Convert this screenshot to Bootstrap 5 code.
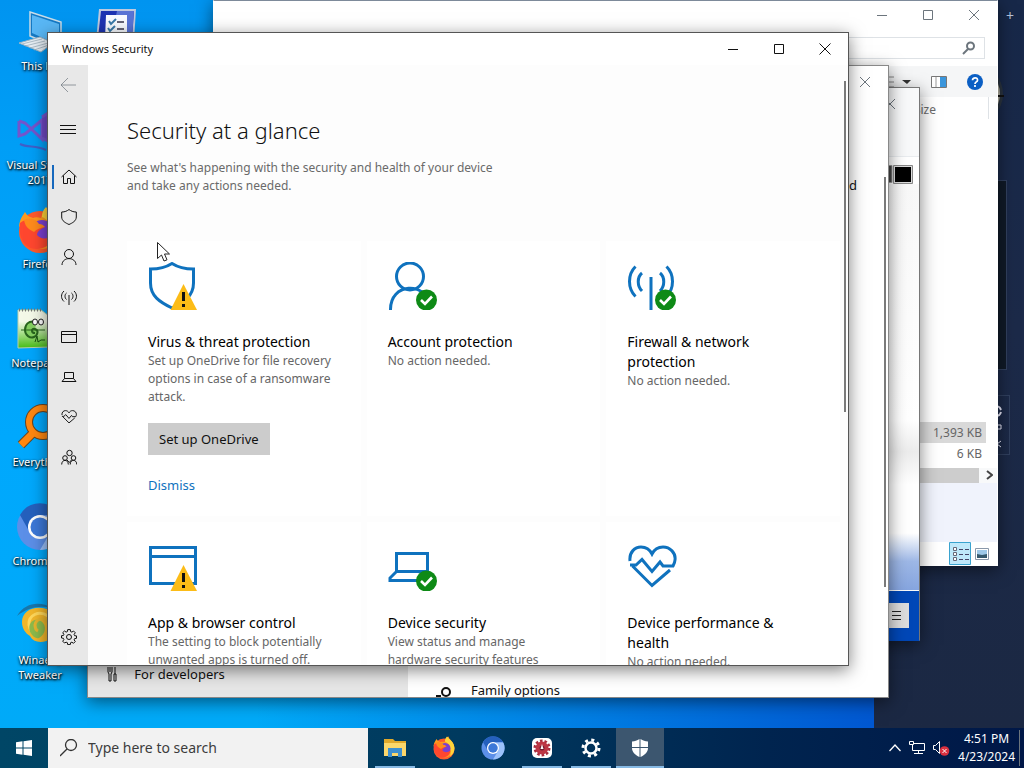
<!DOCTYPE html>
<html lang="en">
<head>
<meta charset="utf-8">
<meta name="viewport" content="width=device-width, initial-scale=1">
<title>Windows Security</title>
<link href="https://cdn.jsdelivr.net/npm/bootstrap@5.3.0/dist/css/bootstrap.min.css" rel="stylesheet">
<style>
:root{--accent:#0f72be}
body{font-family:"Noto Sans","Open Sans",sans-serif;font-size:12px;line-height:18px;color:#111}
svg{display:block;flex:none}
button{border:0;background:none;padding:0;color:inherit}
.desktop{background:linear-gradient(90deg,transparent 25%,#0058d2 85%),linear-gradient(180deg,#0094f0 0,#009ef6 20%,#00a8fd 60%,#00aaf8 100%)}
.win{position:absolute;background:#fff;border:1px solid #666;box-shadow:0 4px 16px rgba(0,0,0,.5);overflow:hidden}
.gadgets{inset:0 0 0 auto;width:150px;background:linear-gradient(180deg,#172849,#1c2a49 45%,#1b2843)}
.add-gadget{top:7px;right:10px;color:#b8c4dc;font-size:14px}
.clock-face{top:62px;right:20px}
.graph-box{top:180px;right:17px;width:20px;height:190px;background:#101a28;border:1px solid #31405f}
.cal-box{top:395px;right:14px;width:24px;height:60px;border:1px solid #31405f}
.explorer{inset:0 26px 162px 213px;border-color:#7d8a9a #fff #fff}
.explorer .caption-btn{height:28px}
.explorer-search{height:22px;margin:8px 12px 0 0}
.explorer-tools{height:31px;margin-top:7px;padding-right:14px;background:#f5f6f7}
.size-head{margin-right:8px;padding:4px 52px 0 0}
.browser{inset:87px 104px 87px 130px;border-color:#777 #777 #0046b4;background:#0047b7}
.settings{inset:65px 135px 30px 87px;border-color:#888}
.security{inset:32px 175px 62px 47px;border-color:#555}
.win-title{padding-left:14px;font-size:11px}
.caption-btn{width:46px;height:32px;display:grid;place-items:center}
.desk-item{width:80px;height:99px;text-align:center;color:#fff;text-decoration:none;font-size:11px;line-height:15px;text-shadow:1px 1px 2px #000,0 1px 3px #000}
.desk-item svg{margin:0 auto 2px}
.side-nav{width:40px;background:#e8e8e8}
.side-nav .slot{width:40px;height:40px;display:grid;place-items:center;position:relative;color:#111}
.side-nav a.slot{padding-left:2px}
.side-nav .current::before{content:"";position:absolute;left:4px;top:8px;width:2px;height:24px;background:#1668bd}
.side-nav svg,.caption-btn svg,.line-icon{fill:none;stroke:currentColor}
.pane{background:#fdfdfd;padding:47px 8px 0 39px;position:relative}
.pane h1{font-size:22px;line-height:36px;font-weight:300;margin:0 0 11px;color:#111}
.muted{color:#6a6a6a}
.tiles{display:grid;grid-template-columns:repeat(3,minmax(0,1fr));gap:6px;margin-top:46px}
.tile{background:#fff;padding:21px 26px 0 21px;min-height:275px}
.tile h2{font-size:14px;line-height:20px;font-weight:400;margin:22px 0 0;color:#000}
.tile p{margin:0;color:#666}
.tile-icon{fill:none;stroke:var(--accent);stroke-width:3}
.btn-gray{background:#ccc;border-radius:0;height:32px;padding:0 10px;font-size:13px;line-height:20px;color:#111;margin-top:17px}
.dismiss{color:var(--accent);text-decoration:none;margin-top:20px;font-size:13px;line-height:20px}
.scroll-thumb{position:absolute;width:2px;background:#7a7a7a}
.taskbar{height:40px;background:linear-gradient(90deg,#004666,#003a5f 45%,#00244f 75%,#001747);color:#fff}
.task-start{width:48px}
.search-box{width:320px;background:#f2f2f2;color:#333}
.search-box input{border:0;background:none;outline:0;font-size:14px;color:#333;width:100%}
.search-box input::placeholder{color:#3c3c3c;opacity:1}
.task-list{column-gap:1px;margin-left:3px}
.task-btn{width:48px;height:40px;display:grid;place-items:center;position:relative}
.running::after{content:"";position:absolute;left:4px;right:4px;bottom:0;height:2px;background:#86b9e4}
.focused{background:#3c566f}
.focused::after{left:0;right:0}
.file-row td{padding:0 15px 0 3px;height:21px;text-align:right;color:#666}
.file-row.picked td{background:linear-gradient(#d9d9d9,#d9d9d9) left/calc(100% - 11px) 100% no-repeat}
.pointer{left:157px;top:242px}
</style>
</head>
<body>
<svg width="0" height="0" class="position-absolute">
  <defs>
    <g id="ok" stroke="none"><circle cx="38.500" cy="38" r="10.500" fill="#0e8a16"/><path d="M33 38l4 4 7-7.500" fill="none" stroke="#fff" stroke-width="2.600"/></g>
    <g id="warn" stroke="none"><path d="M35.500 22L49 48H22.500z" fill="#fcbc17"/><path d="M34 30h3v9h-3zM34 42h3v3h-3z" fill="#111"/></g>
    <g id="fox">
      <circle cx="24" cy="26" r="21" fill="#ff5a2c"/>
      <path d="M3 20C4 12 8 8 9 6c2 4 5 5 8 6 2-1 5-1 8 0 2-6 3-9 8-11 1 5 5 7 9 13 4 8 3 16-2 22-6 8-16 8-22 5z" fill="#ff9a1e"/>
      <path d="M30 1c4 6 14 10 15 23 0 8-4 14-9 17 4-12 0-26-10-30 0-4 1-7 4-10z" fill="#ffd43a"/>
      <circle cx="26" cy="25" r="11" fill="#7a3fd0"/>
      <path d="M4 17c6-5 14-4 18 1 3 1 5 1 7 3-6 3-8 5-8 8 4 5 11 4 16 0-1 9-8 14-16 14C9 43 2 32 4 17z" fill="#ff472f"/>
      <path d="M8 14c6-3 12-1 15 4 3 0 4 1 6 3-5 1-8 2-11 5C12 23 9 20 8 14z" fill="#ff8b1c"/>
    </g>
    <g id="chromium">
      <circle cx="24" cy="24" r="23" fill="#5c8fe8"/>
      <path d="M4 12A23 23 0 0 1 44 12H24A12 12 0 0 0 13 28z" fill="#2560bd"/>
      <path d="M44.500 13A23 23 0 0 1 24 47l10-17c3-5 1-11-4-17z" fill="#9cc2fb"/>
      <circle cx="24" cy="24" r="12" fill="#fff"/><circle cx="24" cy="24" r="9.500" fill="#3c78d8"/>
    </g>
    <path id="heart" d="M3 18C2 9 8 4 14 4c5 0 9 3 11 7 2-4 6-7 11-7 7 0 13 6 12 13 0 2-1 4-2 6H36l-3-4-8 9.500-10-12L9 22H3M5.500 23L25 42.500 43 27"/>
  </defs>
</svg>

<div class="vh-100 d-flex flex-column overflow-hidden">
<main class="desktop position-relative flex-grow-1 overflow-hidden">
  <div class="d-flex align-items-start pt-2">
    <nav class="d-flex flex-column" aria-label="Desktop">
      <a href="#" class="desk-item"><svg width="48" height="48" viewBox="0 0 48 48"><path d="M14 4l31 10v27L14 28z" fill="#1579c4" stroke="#c8dce8" stroke-width="1.500"/><path d="M16 7l27 9v21L16 25z" fill="#59b7f5"/><path d="M3 35l21-6 13 6-12 9z" fill="#e7eef4" stroke="#9db4c4"/><path d="M6 36l20-5M9 38l20-5M14 40l18-5M18 42l15-5" stroke="#93a6b3" stroke-width=".7"/></svg>This PC</a>
      <a href="#" class="desk-item"><svg width="48" height="48" viewBox="0 0 48 48" fill="none" stroke="#7455cc" stroke-width="3"><path d="M3 14v15l6-2 17-14v19L9 16l-6-2"/><path d="M26 10l6-4v28l-6-3" fill="#7048c4"/><path d="M4 37c8 4 15 1 26 6" stroke="#415fc8" stroke-width="2"/></svg>Visual Studio<br>2017</a>
      <a href="#" class="desk-item"><svg width="48" height="48" viewBox="0 0 48 48"><use href="#fox"/></svg>Firefox</a>
      <a href="#" class="desk-item"><svg width="48" height="48" viewBox="0 0 48 48"><defs><linearGradient id="npp" x2="0" y2="1"><stop offset=".3" stop-color="#f4f9e8"/><stop offset="1" stop-color="#48bd16"/></linearGradient></defs><path d="M2 5h23l8 6v31l-31 1z" fill="url(#npp)" stroke="#b6cfaa"/><path d="M3 5h23" stroke="#777" stroke-width="3" stroke-dasharray="1 2"/><path d="M20 17c-8-2-11 3-11 8s5 9 9 7 5-7 1-8-4 4 0 4" fill="#83ce60" stroke="#28651d" stroke-width="2"/><path d="M5 25h24" stroke="#28651d"/><ellipse cx="19" cy="17" rx="2.500" ry="3" fill="#fff" stroke="#222"/><ellipse cx="25" cy="17" rx="2.500" ry="3" fill="#fff" stroke="#222"/><path d="M19 37l2-6 1 6 3-2 4 0" fill="none" stroke="#195211"/></svg>Notepad++</a>
      <a href="#" class="desk-item"><svg width="48" height="48" viewBox="0 0 48 48" fill="none"><circle cx="27" cy="18" r="14" stroke="#6a4521" stroke-width="8"/><path d="M17 29L5 41" stroke="#6a4521" stroke-width="9"/><circle cx="27" cy="18" r="14" stroke="#ff8710" stroke-width="6"/><path d="M17 29L5 41" stroke="#ff8710" stroke-width="7"/></svg>Everything</a>
      <a href="#" class="desk-item"><svg width="48" height="48" viewBox="0 0 48 48"><use href="#chromium"/></svg>Chromium</a>
      <a href="#" class="desk-item"><svg width="48" height="48" viewBox="0 0 48 48"><path d="M1 14C9 0 25-1 36 6 24 3 12 5 1 14z" fill="#1976aa"/><path d="M6 20C6 8 19 3 31 7c12 6 13 22 5 29-8 6-19 5-22-2C9 31 6 26 6 20z" fill="#f2b72b"/><path d="M32 14c-9-6-20-1-19 9 1 5 3 8 6 9" fill="none" stroke="#ffd85c" stroke-width="3"/><path d="M14 30c-3-9 4-15 11-11 6 4 5 13-2 17-3 1-6-1-9-6z" fill="#8dbb4c"/><path d="M31 20c-4-5-11-3-12 3 0 3 1 5 3 6" fill="none" stroke="#e8b52e" stroke-width="3"/></svg>Winaero<br>Tweaker</a>
    </nav>
    <a href="#" class="desk-item" aria-label="Checklist"><svg width="48" height="48" viewBox="0 0 48 48"><path d="M3 1h37l-2 32H0z" fill="#bfc9df"/><path d="M5 3h33l-2 27H2z" fill="#1d34b2"/><path d="M21 3h17l-2 27H15z" fill="#5974d5"/><path d="M10 7h21v24H9z" fill="#f8fbff"/><path d="M13 13l2 3 5-5M12 20l2 3 5-5" fill="none" stroke="#3979a8" stroke-width="2"/><path d="M21 14h7M21 21h7" stroke="#667" stroke-width="2"/></svg></a>
  </div>

  <aside class="gadgets position-absolute overflow-hidden">
    <button class="add-gadget position-absolute" aria-label="Add gadget">+</button>
    <svg class="clock-face position-absolute" width="64" height="64" viewBox="0 0 64 64"><circle cx="32" cy="32" r="31" fill="#2b3540"/><circle cx="32" cy="32" r="28" fill="#b8b6a6"/><path d="M34 34h30" stroke="#111" stroke-width="2"/><circle cx="32" cy="32" r="25" fill="none" stroke="#444" stroke-width="1.500" stroke-dasharray="1 4"/></svg>
    <div class="graph-box position-absolute"></div>
    <div class="cal-box position-absolute"><svg class="ms-1 mt-2" width="16" height="44" viewBox="0 0 16 44" fill="none" stroke="#eef"><path d="M4 2c5 0 5 2 6 4M10 8c-1 3-2 4-6 4" stroke-width="2"/><path d="M5 21h5v4H5zM10 37l-4 3 4 3"/></svg></div>
  </aside>

  <section class="win explorer d-flex flex-column" aria-label="File Explorer">
    <div class="d-flex justify-content-end text-secondary">
      <button class="caption-btn" aria-label="Minimize"><svg width="10" height="10"><path d="M0 5.500h10"/></svg></button>
      <button class="caption-btn" aria-label="Maximize"><svg width="10" height="10"><path d="M.5.500h9v9h-9z"/></svg></button>
      <button class="caption-btn" aria-label="Close"><svg width="10" height="10"><path d="M0 0l10 10M10 0L0 10"/></svg></button>
    </div>
    <div class="explorer-search d-flex justify-content-end align-items-center border pe-1">
      <svg class="line-icon text-secondary me-1" width="14" height="14"><circle cx="8.500" cy="5" r="3.500" stroke-width="2"/><path d="M6 8l-5 5" stroke-width="2"/></svg>
    </div>
    <div class="explorer-tools d-flex justify-content-end align-items-center">
      <svg width="26" height="12"><path d="M0 1h9M0 6h9M0 11h9" stroke="#888"/><path d="M17 4h9l-4 4z" fill="#333"/></svg>
      <svg style="margin-left:20px" width="16" height="12"><path d="M.5.500h15v11H.5z" fill="#fff" stroke="#777"/><path d="M9 1h6v10H9z" fill="#3b96dc"/><path d="M5 1v10" stroke="#999"/></svg>
      <svg style="margin-left:20px" width="16" height="16" viewBox="0 0 16 16"><circle cx="8" cy="8" r="8" fill="#0b5fc4"/><path d="M5.500 6.300C5.500 3 11 3 10.500 6.300 10.300 8 8 8 8 10M8 11v2" fill="none" stroke="#fff" stroke-width="1.700"/></svg>
    </div>
    <div class="size-head text-end muted border-end">Size</div>
    <table class="mt-auto w-100"><tbody><tr class="file-row picked"><td>1,393 KB</td></tr><tr class="file-row"><td>6 KB</td></tr></tbody></table>
    <div class="d-flex justify-content-end mt-1 bg-light"><div class="flex-grow-1" style="background:#cdcdcd"></div><svg class="mx-1" width="10" height="15"><path d="M4 3l5 4-5 4" fill="none" stroke="#444" stroke-width="2"/></svg></div>
    <div style="height:59px;background:#f0f3fc"></div>
    <div class="d-flex justify-content-end align-items-center gap-1 pe-2">
      <button aria-label="Details"><svg width="22" height="23"><path d="M.5.500h21v22H.5z" fill="#bfe8fa" stroke="#3aa3cf"/><path d="M4.500 5.500h3v3h-3zM4.500 10.500h3v3h-3zM4.500 15.500h3v3h-3z" fill="#fff" stroke="#667"/><path d="M10 7.500h10M10 12.500h10M10 17.500h10" stroke="#446" stroke-dasharray="4 2"/></svg></button>
      <button aria-label="Large icons"><svg width="14" height="12"><path d="M.5.500h13v11H.5z" fill="#fff" stroke="#8a98aa"/><path d="M2 2h10v8H2z" fill="#9dc8e8"/><path d="M2 6l5 1 5-1v4H2z" fill="#34586c"/></svg></button>
    </div>
  </section>

  <section class="win browser d-flex flex-column" aria-label="Editor">
    <div class="d-flex flex-column flex-grow-1 bg-white">
      <div class="d-flex justify-content-end text-secondary bg-light border-bottom border-secondary-subtle" style="height:69px;padding-right:6px"><button class="caption-btn" aria-label="Close"><svg width="10" height="10"><path d="M0 0l10 10M10 0L0 10"/></svg></button></div>
      <div class="d-flex justify-content-end mt-2" style="padding-right:6px"><svg width="20" height="19"><path d="M0 .5h19v17H0z" fill="#444" stroke="#999"/></svg><svg width="20" height="19"><path d="M.5.500h19v18H.5z" fill="#ddd" stroke="#888"/><path d="M2 2h16v15H2z"/></svg></div>
      <div class="flex-grow-1" style="background:linear-gradient(180deg,#f8f8f8,#fff 58%,#ececec 66%,#fff 74%,#fff 86%,#9db7e6 93%,#86a5df)"></div>
    </div>
    <div class="d-flex justify-content-end align-items-center border-top border-light" style="height:50px;padding-right:10px"><button style="width:25px;height:25px;background:#ddd" aria-label="Menu"><svg class="mx-auto" width="9" height="9"><path d="M0 .5h9M0 4.500h9M0 8.500h9" stroke="#222"/></svg></button></div>
  </section>

  <section class="win settings d-flex" aria-label="Settings">
    <div class="d-flex flex-column justify-content-end" style="width:320px;background:#e6e6e6">
      <a href="#" class="d-flex align-items-center text-reset text-decoration-none ps-3" style="font-size:13px;height:36px;padding-bottom:10px"><svg class="line-icon" style="margin-left:3px" width="10" height="16"><path d="M1 1v5l1 2v7h2V8l1-2V1M3 1v5M8 1v7M7 8h2v7H7z"/></svg><span class="ms-3">&#8202;For developers</span></a>
    </div>
    <div class="flex-grow-1 d-flex flex-column">
      <div class="d-flex justify-content-end text-secondary"><button class="caption-btn" aria-label="Close"><svg width="10" height="10"><path d="M0 0l10 10M10 0L0 10"/></svg></button></div>
      <div class="text-end" style="padding:78px 31px 0 0;font-size:13px">d</div>
      <a href="#" class="mt-auto d-flex align-items-start text-reset text-decoration-none" style="padding-left:28px;font-size:13px;height:16px"><svg class="line-icon mt-1" width="16" height="12"><circle cx="10" cy="7" r="4" stroke-width="2"/><path d="M0 11h5" stroke-width="2"/></svg><span style="padding-left:19px">Family options</span></a>
    </div>
    <div class="scroll-thumb" style="top:111px;right:2px;bottom:110px"></div>
  </section>

  <section class="win security d-flex flex-column" aria-label="Windows Security">
    <header class="d-flex align-items-center justify-content-between">
      <span class="win-title">Windows Security</span>
      <div class="d-flex">
        <button class="caption-btn" aria-label="Minimize"><svg width="10" height="10"><path d="M0 5.500h10"/></svg></button>
        <button class="caption-btn" aria-label="Maximize"><svg width="10" height="10"><path d="M.5.500h9v9h-9z"/></svg></button>
        <button class="caption-btn" aria-label="Close"><svg width="12" height="12"><path d="M.5.500l11 11M11.500.500l-11 11"/></svg></button>
      </div>
    </header>
    <div class="d-flex flex-grow-1" style="min-height:0">
      <nav class="side-nav d-flex flex-column flex-shrink-0 pb-2">
        <button class="slot mb-1 text-secondary" aria-label="Back"><svg width="16" height="16"><path d="M1 8h15M8 1L1 8l7 7" opacity=".7"/></svg></button>
        <button class="slot mb-2" aria-label="Menu"><svg width="16" height="10"><path d="M0 1.500h16M0 5.500h16M0 9.500h16"/></svg></button>
        <a href="#" class="slot current" aria-label="Home"><svg width="16" height="16"><path d="M.5 8L8 1l7.500 7M2.500 6.500V14.500h4v-5h3v5h4v-8"/></svg></a>
        <a href="#" class="slot" aria-label="Virus protection"><svg width="16" height="16"><path d="M8 .5C6 2 4 3 .7 3v5c0 4 4 6 7.300 7.500C11.300 14 15.300 12 15.300 8V3C12 3 10 2 8 .5z"/></svg></a>
        <a href="#" class="slot" aria-label="Account protection"><svg width="16" height="16"><circle cx="8" cy="5" r="4.500"/><path d="M1 16c0-8.500 14-8.500 14 0"/></svg></a>
        <a href="#" class="slot" aria-label="Firewall"><svg width="16" height="16"><path d="M8 6v10M5.500 4c-2 1.500-2 5 0 6.500M10.500 4c2 1.500 2 5 0 6.500M3 2C-.3 5-.3 9.500 3 12.500M13 2c3.300 3 3.300 7.500 0 10.500"/></svg></a>
        <a href="#" class="slot" aria-label="App control"><svg width="16" height="14"><path d="M.5 1.500h15v11H.5zM.5 4.500h15"/></svg></a>
        <a href="#" class="slot" aria-label="Device security"><svg width="16" height="12"><path d="M3.500 1.500h9v6h-9zM3.500 7.500L1 10.500h14l-2.500-3"/></svg></a>
        <a href="#" class="slot" aria-label="Device health"><svg width="16" height="16" viewBox="0 0 50 48" stroke-width="3"><use href="#heart"/></svg></a>
        <a href="#" class="slot" aria-label="Family options"><svg width="16" height="16"><circle cx="8.500" cy="4" r="2.700"/><circle cx="4" cy="9" r="2.300"/><circle cx="12.500" cy="9" r="2.300"/><path d="M.7 15.500c0-5.500 6.600-5.500 6.600 0M9.200 15.500c0-5.500 6.600-5.500 6.600 0M6 11l2.300 2.500L10.500 11"/></svg></a>
        <a href="#" class="slot mt-auto" aria-label="Settings"><svg width="16" height="16" viewBox="0 0 16 16"><circle cx="8" cy="8" r="2.500"/><path d="M6.700.6h2.600l.3 2 1.300.5L12.500 2l1.800 1.800-1.200 1.600.5 1.300 1.900.2v2.400l-1.900.3-.5 1.300 1.200 1.600-1.800 1.800-1.600-1.100-1.300.5-.3 1.900H6.700l-.3-1.900-1.300-.5L3.500 14l-1.800-1.800 1.200-1.600-.5-1.300-1.900-.3V6.700l1.900-.2.500-1.200-1.200-1.600L3.500 2l1.600 1.100 1.300-.5z"/></svg></a>
      </nav>
      <div class="pane flex-grow-1 overflow-hidden">
        <h1>Security at a glance</h1>
        <div class="muted">See what's happening with the security and health of your device<br>and take any actions needed.</div>
        <div class="tiles">
          <article class="tile d-flex flex-column align-items-start">
            <svg class="tile-icon" width="50" height="48"><path d="M24 1.500C17 6 10 7 2.500 7v14c0 13 9 19 21.500 25C36 40 45.500 34 45.500 21V7C38 7 31 6 24 1.500z"/><use href="#warn"/></svg>
            <h2>Virus &amp; threat protection</h2><p>Set up OneDrive for file recovery options in case of a ransomware attack.</p>
            <button class="btn btn-gray">Set up OneDrive</button>
            <a href="#" class="dismiss">Dismiss</a>
          </article>
          <article class="tile"><svg class="tile-icon" width="50" height="48"><circle cx="22" cy="14.500" r="13.500"/><path d="M2.500 48C2 20 38 20 41 42"/><use href="#ok"/></svg><h2>Account protection</h2><p>No action needed.</p></article>
          <article class="tile"><svg class="tile-icon" width="50" height="48"><path d="M24 15v33M15 11c-5 4-5 13 0 18M33 11c5 4 5 13 0 18M8.500 4.500c-8 8-8 22 0 30M39.500 4.500c8 8 8 22 0 30"/><use href="#ok"/></svg><h2>Firewall &amp; network protection</h2><p>No action needed.</p></article>
          <article class="tile"><svg class="tile-icon" width="50" height="48"><path d="M2.500 4.500h45v36h-45zM2.500 13.500h45"/><use href="#warn"/></svg><h2>App &amp; browser control</h2><p>The setting to block potentially unwanted apps is turned off.</p></article>
          <article class="tile"><svg class="tile-icon" width="50" height="48"><path d="M8.500 10.500h31v18h-31zM8.500 28.500L2 35v2.500h35M39.500 28.500L46 35"/><use href="#ok"/></svg><h2>Device security</h2><p>View status and manage hardware security features</p></article>
          <article class="tile"><svg class="tile-icon" width="50" height="48" viewBox="0 0 50 48"><use href="#heart"/></svg><h2>Device performance &amp; health</h2><p>No action needed.</p></article>
        </div>
        <div class="scroll-thumb" style="top:16px;right:2px;height:331px"></div>
      </div>
    </div>
  </section>

  <svg class="pointer position-absolute" width="13" height="20"><path d="M.5.500v16l4-3.500 2.500 6 3-1.200-2.500-5.800h5z" fill="#fff" stroke="#222"/></svg>
</main>

<footer class="taskbar d-flex flex-shrink-0 align-items-stretch">
  <button class="task-start d-grid align-items-center" aria-label="Start"><svg class="mx-auto" width="16" height="16"><path d="M0 2.300l6.500-1v6.200H0zM7.500 1.200L16 0v7.500H7.500zM0 8.500h6.500v6.200l-6.500-1zM7.500 8.500H16V16l-8.500-1.200z" fill="#fff"/></svg></button>
  <label class="search-box d-flex align-items-center ps-2"><svg class="line-icon mx-1 me-2" width="18" height="18"><circle cx="11" cy="6" r="5.500" stroke-width="1.300"/><path d="M7 10l-7 7" stroke-width="1.300"/></svg><input type="text" placeholder="Type here to search" aria-label="Search"></label>
  <div class="task-list d-flex">
    <button class="task-btn running" aria-label="File Explorer"><svg width="22" height="20" viewBox="0 0 22 20"><path d="M0 1h9l2 2h11v15H0z" fill="#e0a92c"/><path d="M0 5h22v13H0z" fill="#fbd76b"/><path d="M4 10h14v9h-4v-4H8v4H4z" fill="#3d8fd0"/></svg></button>
    <button class="task-btn" aria-label="Firefox"><svg width="24" height="24" viewBox="0 0 48 48"><use href="#fox"/></svg></button>
    <button class="task-btn" aria-label="Chromium"><svg width="24" height="24" viewBox="0 0 48 48"><use href="#chromium"/></svg></button>
    <button class="task-btn running" aria-label="Gear app"><svg width="20" height="20" viewBox="0 0 20 20"><rect width="20" height="20" rx="5" fill="#fff"/><circle cx="10" cy="10" r="7" fill="none" stroke="#a72d3e" stroke-width="3" stroke-dasharray="2.500 1.900"/><circle cx="10" cy="10" r="6.500" fill="#bd3645"/><circle cx="10" cy="10" r="2.500" fill="#701c30"/><path d="M10 6l1.500 5h-3z" fill="#fff"/></svg></button>
    <button class="task-btn running" aria-label="Settings"><svg width="20" height="20" viewBox="0 0 20 20" fill="none" stroke="#fff"><circle cx="10" cy="10" r="5.500" stroke-width="2.500"/><circle cx="10" cy="10" r="8" stroke-width="3" stroke-dasharray="3 3.283"/></svg></button>
    <button class="task-btn running focused" aria-label="Windows Security"><svg width="18" height="20" viewBox="0 0 18 20"><path d="M8.500 1v8H1V3.500C4 3.500 6 2.500 8.500 1zM9.500 1c2.500 1.500 4.500 2.500 7.500 2.500V9H9.500zM1 10h7.500v9C4 17 1 14 1 10zM17 10H9.500v9c4.500-2 7.500-5 7.500-9z" fill="#fff"/></svg></button>
  </div>
  <div class="ms-auto d-flex align-items-center gap-2">
    <button aria-label="Hidden icons"><svg class="line-icon" width="12" height="8"><path d="M.5 7L6 1l5.500 6" stroke-width="1.300"/></svg></button>
    <svg class="line-icon" width="16" height="14" role="img" aria-label="Network"><path d="M4 2.500h11.500v7H3.500V4M9.500 9.500v3M5 12.500h9M.5.500h4v3h-4z"/></svg>
    <svg width="17" height="15" role="img" aria-label="Muted"><path d="M.5 4.500h2l4-4v12l-4-4h-2z" fill="none" stroke="#fff"/><circle cx="11.500" cy="10" r="4.800" fill="#d9303f"/><path d="M9.500 8l4 4M13.500 8l-4 4" stroke="#fff"/></svg>
    <time class="text-center border-end border-secondary me-1 pe-1">4:51 PM<br>4/23/2024</time>
  </div>
</footer>
</div>
<script src="https://cdn.jsdelivr.net/npm/bootstrap@5.3.0/dist/js/bootstrap.bundle.min.js"></script>
</body>
</html>
